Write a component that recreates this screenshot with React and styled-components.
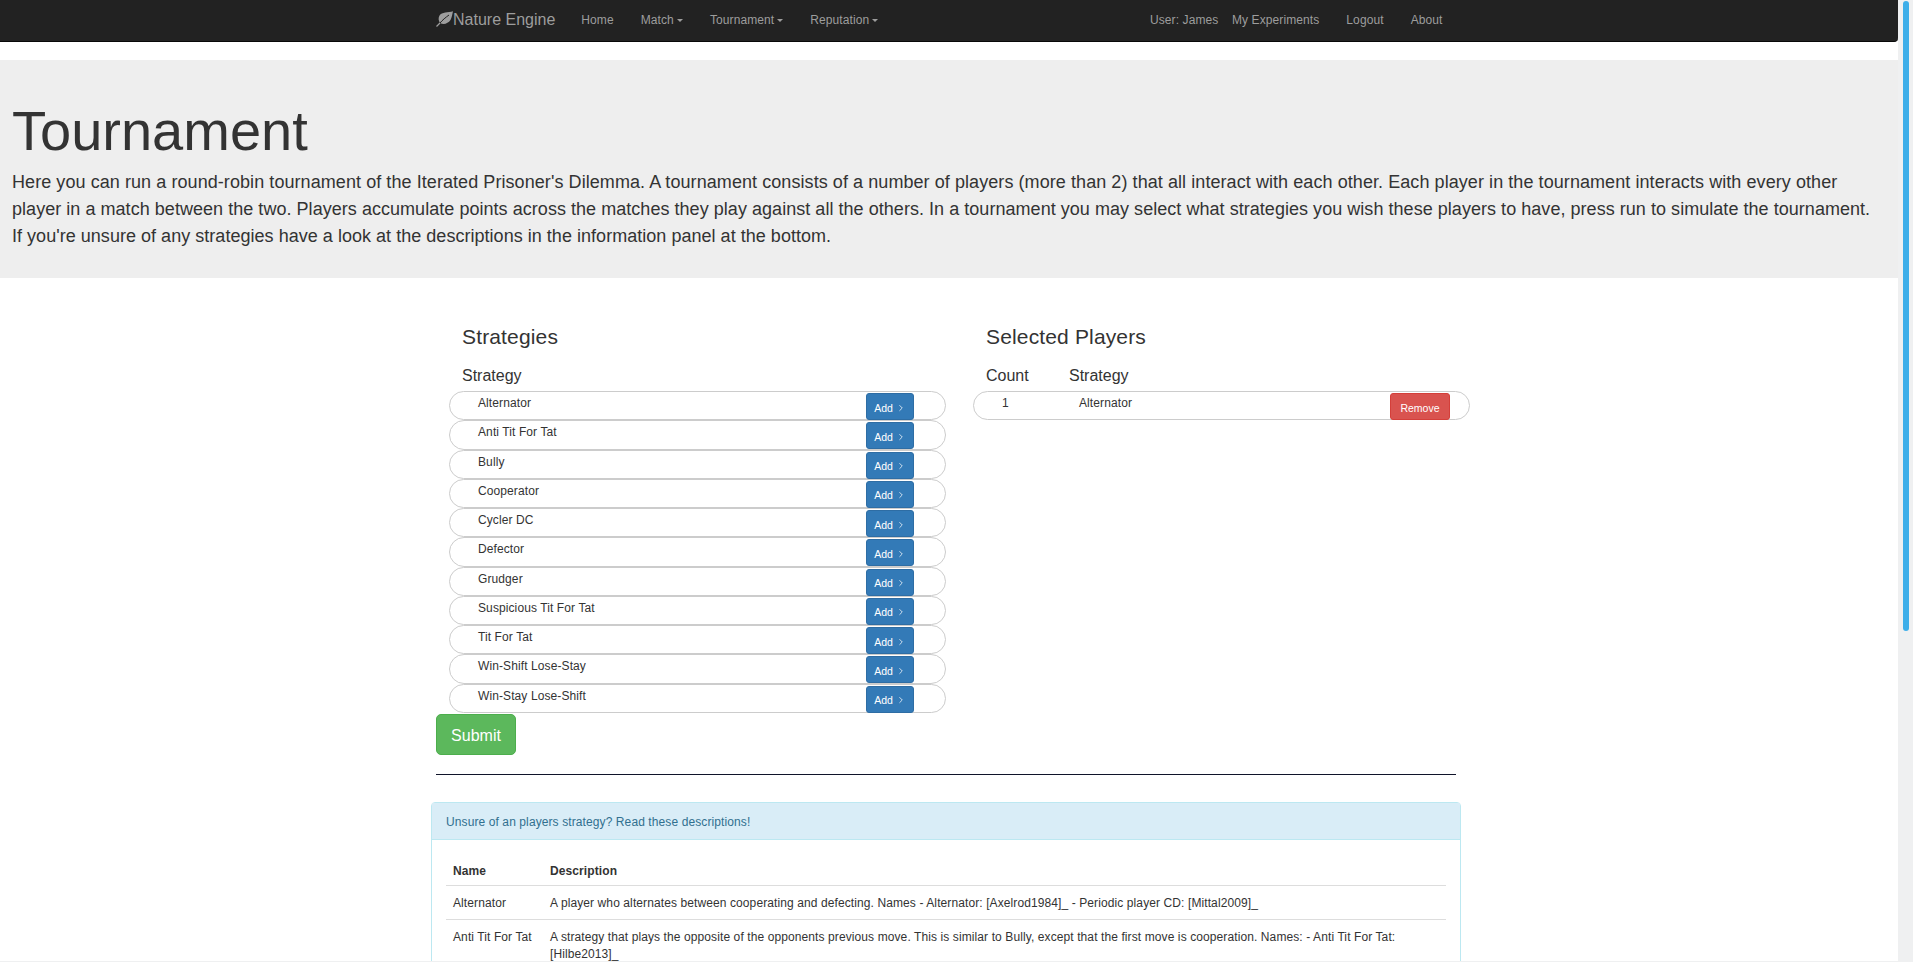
import styled, { createGlobalStyle } from "styled-components";
import { ChevronRight } from "lucide-react";

const GlobalStyle = createGlobalStyle`
  html, body, #root {
    height: 100%;
    margin: 0;
    overflow: hidden;
  }
  body {
    font-family: "Liberation Sans", Arial, sans-serif;
    font-size: 12px;
    line-height: 1.42857;
    letter-spacing: 0.1px;
    color: #333;
    background: #fff;
  }
  * {
    box-sizing: border-box;
  }
`;

const Frame = styled.div`
  display: flex;
  flex-direction: column;
  height: 100vh;
`;

const Viewport = styled.div`
  display: flex;
  flex: 1;
  min-height: 0;
`;

const BottomEdge = styled.div`
  height: 1px;
  background: #eff0f1;
`;

const Page = styled.div`
  flex: 1;
  min-width: 0;
  overflow: hidden;
`;

const ScrollTrack = styled.div`
  flex: 0 0 15px;
  background: #eff0f1;
  padding: 1px 4px 0 5px;
`;

const ScrollThumb = styled.div`
  height: 630px;
  background: #3daee9;
  border-radius: 3px;
`;

const Navbar = styled.nav`
  height: 42px;
  background: #222;
  border-bottom: 1px solid #080808;
  border-bottom-right-radius: 4px;
  margin-bottom: 18px;
  padding-left: 436px;
  color: #9d9d9d;
`;

const NavInner = styled.div`
  display: flex;
  align-items: center;
  width: 1020px;
  height: 41px;
`;

const Brand = styled.a`
  display: flex;
  align-items: center;
  font-size: 16px;
  letter-spacing: 0;
  margin-right: 12.5px;
`;

const BrandLeaf = styled.svg`
  margin-top: -4px;
`;

const NavItem = styled.a`
  display: flex;
  align-items: center;
  padding: 0 13.5px;
  white-space: nowrap;
`;

const Caret = styled.span`
  width: 0;
  height: 0;
  margin-left: 3px;
  margin-top: 1px;
  border-top: 3px solid #9d9d9d;
  border-left: 3px solid transparent;
  border-right: 3px solid transparent;
`;

const NavRight = styled.div`
  display: flex;
  align-items: center;
  margin-left: auto;
`;

const UserName = styled.span`
  white-space: nowrap;
`;

const Jumbotron = styled.header`
  height: 218px;
  background: #eee;
  padding: 40px 12px 0;
`;

const PageTitle = styled.h1`
  margin: 0 0 7px;
  font-size: 56px;
  font-weight: 400;
  letter-spacing: 0;
  line-height: 1.1;
`;

const Lead = styled.p`
  margin: 0;
  font-size: 18px;
  line-height: 27px;
  white-space: nowrap;
`;

const LeadLine = styled.span`
  display: block;
  letter-spacing: ${(p) => p.$spacing}px;
`;

const Container = styled.main`
  width: 1030px;
  margin-left: 431px;
  padding-top: 47px;
`;

const Columns = styled.div`
  display: flex;
  gap: 27px;
  padding-left: 18px;
`;

const Column = styled.section`
  flex: 0 0 497px;
`;

const SectionTitle = styled.h3`
  margin: 0 0 17px 13px;
  font-size: 21px;
  font-weight: 400;
  letter-spacing: 0.15px;
  line-height: 23px;
`;

const ColumnHeads = styled.div`
  display: flex;
  margin-left: 13px;
  font-size: 16px;
  letter-spacing: 0;
  line-height: 22px;
  height: 26px;
`;

const CountHead = styled.span`
  width: 83px;
`;

const Pill = styled.div`
  display: flex;
  align-items: flex-start;
  height: 29.27px;
  border: 1px solid #ccc;
  border-radius: 15px;
  padding-left: 28px;
`;

const PillCount = styled.span`
  width: 77px;
  padding-top: 3px;
  line-height: 17px;
`;

const PillName = styled.span`
  flex: 1;
  padding-top: 3px;
  line-height: 17px;
`;

const SmallButton = styled.button`
  display: flex;
  align-items: center;
  justify-content: center;
  gap: 3px;
  width: ${(p) => p.$width}px;
  height: 27px;
  margin: 1px ${(p) => p.$gap}px 0 0;
  padding: 2px 0 0;
  font: 10.5px "Liberation Sans", Arial, sans-serif;
  color: #fff;
  background: ${(p) => p.$bg};
  border: 1px solid ${(p) => p.$edge};
  border-radius: 3px;
`;

const SubmitButton = styled.button`
  display: block;
  width: 80px;
  height: 41px;
  margin: 1px 0 0 5px;
  padding: 4px 0 0;
  font: 16px "Liberation Sans", Arial, sans-serif;
  color: #fff;
  background: #5cb85c;
  border: 1px solid #4cae4c;
  border-radius: 5px;
`;

const Rule = styled.hr`
  height: 1px;
  margin: 19px 5px 27px;
  border: 0;
  background: #10142a;
`;

const Panel = styled.section`
  border: 1px solid #bce8f1;
  border-radius: 4px 4px 0 0;
`;

const PanelHead = styled.div`
  height: 37px;
  padding: 0 14px;
  line-height: 38px;
  color: #31708f;
  background: #d9edf7;
  border-bottom: 1px solid #bce8f1;
`;

const PanelBody = styled.div`
  padding: 15px 14px;
`;

const Table = styled.table`
  width: 100%;
  border-collapse: collapse;
`;

const HeadCell = styled.th`
  width: ${(p) => p.$width || "auto"};
  padding: 8px 7px 5px;
  text-align: left;
  border-bottom: 1px solid #ddd;
`;

const Cell = styled.td`
  padding: 9px 7px 7px;
  vertical-align: top;
  border-top: 1px solid #ddd;
`;

const strategies = [
  "Alternator",
  "Anti Tit For Tat",
  "Bully",
  "Cooperator",
  "Cycler DC",
  "Defector",
  "Grudger",
  "Suspicious Tit For Tat",
  "Tit For Tat",
  "Win-Shift Lose-Stay",
  "Win-Stay Lose-Shift",
];

const descriptions = [
  [
    "Alternator",
    "A player who alternates between cooperating and defecting. Names - Alternator: [Axelrod1984]_ - Periodic player CD: [Mittal2009]_",
  ],
  [
    "Anti Tit For Tat",
    "A strategy that plays the opposite of the opponents previous move. This is similar to Bully, except that the first move is cooperation. Names: - Anti Tit For Tat: [Hilbe2013]_",
  ],
];

function Leaf() {
  return (
    <BrandLeaf width="17" height="16" viewBox="0 0 17 16" fill="none">
      <path d="M17 0.3C12 1.5 6 1 3.5 4.5C2 7 2.5 10 4 12C8 14 12 12.5 14.5 9C16 6 16.4 3 17 0.3Z" fill="#9d9d9d" />
      <path d="M4 12C6.5 9 9.5 6.5 13 4" stroke="#222" strokeWidth="1" />
      <path d="M0.5 15.5L4 12" stroke="#9d9d9d" strokeWidth="1.2" />
    </BrandLeaf>
  );
}

export default function App() {
  return (
    <Frame>
      <GlobalStyle />
      <Viewport>
        <Page>
          <Navbar>
            <NavInner>
              <Brand>
                <Leaf />
                Nature Engine
              </Brand>
              <NavItem>Home</NavItem>
              <NavItem>Match<Caret /></NavItem>
              <NavItem>Tournament<Caret /></NavItem>
              <NavItem>Reputation<Caret /></NavItem>
              <NavRight>
                <UserName>User: James</UserName>
                <NavItem>My Experiments</NavItem>
                <NavItem>Logout</NavItem>
                <NavItem>About</NavItem>
              </NavRight>
            </NavInner>
          </Navbar>

          <Jumbotron>
            <PageTitle>Tournament</PageTitle>
            <Lead>
              <LeadLine $spacing={0.07}>
                Here you can run a round-robin tournament of the Iterated Prisoner's Dilemma. A tournament consists of a
                number of players (more than 2) that all interact with each other. Each player in the tournament
                interacts with every other
              </LeadLine>
              <LeadLine $spacing={0.04}>
                player in a match between the two. Players accumulate points across the matches they play against all
                the others. In a tournament you may select what strategies you wish these players to have, press run to
                simulate the tournament.
              </LeadLine>
              <LeadLine $spacing={0.03}>
                If you're unsure of any strategies have a look at the descriptions in the information panel at the
                bottom.
              </LeadLine>
            </Lead>
          </Jumbotron>

          <Container>
            <Columns>
              <Column>
                <SectionTitle>Strategies</SectionTitle>
                <ColumnHeads>Strategy</ColumnHeads>
                {strategies.map((name) => (
                  <Pill key={name}>
                    <PillName>{name}</PillName>
                    <SmallButton $width={48} $gap={31} $bg="#337ab7" $edge="#2e6da4">
                      Add <ChevronRight size={10} strokeWidth={1.8} />
                    </SmallButton>
                  </Pill>
                ))}
              </Column>
              <Column>
                <SectionTitle>Selected Players</SectionTitle>
                <ColumnHeads>
                  <CountHead>Count</CountHead>
                  Strategy
                </ColumnHeads>
                <Pill>
                  <PillCount>1</PillCount>
                  <PillName>Alternator</PillName>
                  <SmallButton $width={60} $gap={19} $bg="#d9534f" $edge="#d43f3a">
                    Remove
                  </SmallButton>
                </Pill>
              </Column>
            </Columns>

            <SubmitButton>Submit</SubmitButton>
            <Rule />

            <Panel>
              <PanelHead>Unsure of an players strategy? Read these descriptions!</PanelHead>
              <PanelBody>
                <Table>
                  <thead>
                    <tr>
                      <HeadCell $width="97px">Name</HeadCell>
                      <HeadCell>Description</HeadCell>
                    </tr>
                  </thead>
                  <tbody>
                    {descriptions.map(([name, text]) => (
                      <tr key={name}>
                        <Cell>{name}</Cell>
                        <Cell>{text}</Cell>
                      </tr>
                    ))}
                  </tbody>
                </Table>
              </PanelBody>
            </Panel>
          </Container>
        </Page>
        <ScrollTrack>
          <ScrollThumb />
        </ScrollTrack>
      </Viewport>
      <BottomEdge />
    </Frame>
  );
}
